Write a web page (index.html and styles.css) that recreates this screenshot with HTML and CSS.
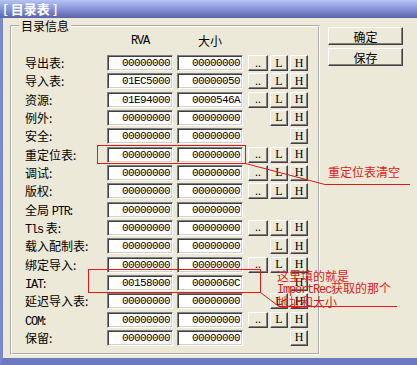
FILE: index.html
```html
<!DOCTYPE html>
<html lang="zh-CN">
<head>
    <meta charset="UTF-8">
    <title>目录表</title>
    <link rel="stylesheet" href="styles.css">
</head>
<body>
    <div class="window">
        <div class="titlebar">[ 目录表 ]</div>

        <div class="client">
            <fieldset class="group">
                <legend>目录信息</legend>

                <div class="row head">
                    <span></span>
                    <span class="en">RVA</span>
                    <span>大小</span>
                </div>

                <div class="rows">
                    <div class="row"><span class="label">导出表:</span><span class="box">00000000</span><span class="box">00000000</span><button class="mini dots">..</button><button class="mini l">L</button><button class="mini h">H</button></div>
                    <div class="row"><span class="label">导入表:</span><span class="box">01EC5000</span><span class="box">00000050</span><button class="mini dots">..</button><button class="mini l">L</button><button class="mini h">H</button></div>
                    <div class="row"><span class="label">资源:</span><span class="box">01E94000</span><span class="box">0000546A</span><button class="mini dots">..</button><button class="mini l">L</button><button class="mini h">H</button></div>
                    <div class="row"><span class="label">例外:</span><span class="box">00000000</span><span class="box">00000000</span><button class="mini l">L</button><button class="mini h">H</button></div>
                    <div class="row"><span class="label">安全:</span><span class="box">00000000</span><span class="box">00000000</span><button class="mini h">H</button></div>
                    <div class="row"><span class="label">重定位表:</span><span class="box">00000000</span><span class="box">00000000</span><button class="mini dots">..</button><button class="mini l">L</button><button class="mini h">H</button></div>
                    <div class="row"><span class="label">调试:</span><span class="box">00000000</span><span class="box">00000000</span><button class="mini dots">..</button><button class="mini l">L</button><button class="mini h">H</button></div>
                    <div class="row"><span class="label">版权:</span><span class="box">00000000</span><span class="box">00000000</span><button class="mini dots">..</button><button class="mini l">L</button><button class="mini h">H</button></div>
                    <div class="row"><span class="label">全局 <span class="en">PTR</span>:</span><span class="box">00000000</span><span class="box">00000000</span></div>
                    <div class="row"><span class="label"><span class="en">Tls</span> 表:</span><span class="box">00000000</span><span class="box">00000000</span><button class="mini dots">..</button><button class="mini l">L</button><button class="mini h">H</button></div>
                    <div class="row"><span class="label">载入配制表:</span><span class="box">00000000</span><span class="box">00000000</span><button class="mini l">L</button><button class="mini h">H</button></div>
                    <div class="row"><span class="label">绑定导入:</span><span class="box">00000000</span><span class="box">00000000</span><button class="mini dots">..</button><button class="mini l">L</button><button class="mini h">H</button></div>
                    <div class="row"><span class="label"><span class="en">IAT</span>:</span><span class="box">00158000</span><span class="box">0000060C</span><button class="mini h">H</button></div>
                    <div class="row"><span class="label">延迟导入表:</span><span class="box">00000000</span><span class="box">00000000</span><button class="mini l">L</button><button class="mini h">H</button></div>
                    <div class="row"><span class="label"><span class="en">COM</span>:</span><span class="box">00000000</span><span class="box">00000000</span><button class="mini dots">..</button><button class="mini l">L</button><button class="mini h">H</button></div>
                    <div class="row"><span class="label">保留:</span><span class="box">00000000</span><span class="box">00000000</span><button class="mini h">H</button></div>
                </div>
            </fieldset>

            <div class="actions">
                <button class="btn">确定</button>
                <button class="btn">保存</button>
            </div>
        </div>

        <!-- red notes drawn over the dialog -->
        <svg class="marks" width="417" height="365" viewBox="0 0 417 365">
            <rect x="97.5" y="145.5" width="148" height="18"/>
            <polyline points="245.5,163.5 325,184.5 410,184.5"/>
            <rect x="88.5" y="269.5" width="172" height="23"/>
            <polyline points="260.5,292.5 279,306.5 397,306.5"/>
        </svg>
        <div class="note note-reloc">重定位表清空</div>
        <div class="note note-iat">这里填的就是<br><span class="en">ImportRec</span>获取的那个<br>地址和大小</div>
    </div>
</body>
</html>
```

FILE: styles.css
```css
* {
    margin: 0;
    padding: 0;
    box-sizing: border-box;
}

body {
    width: 417px;
    height: 365px;
    overflow: hidden;
    font-family: "Noto Sans CJK SC", sans-serif;
    font-size: 12px;
    color: #000;
    background: #ece9d8;
}

.en {
    font-family: "Liberation Mono", monospace;
    letter-spacing: -1.2px;
}

.window {
    position: relative;
    width: 417px;
    height: 365px;
}

.titlebar {
    height: 18px;
    padding-left: 3px;
    background: linear-gradient(#b6c4f4, #8a98dc 45%, #5b64a6);
    color: #fff;
    font-size: 13px;
    font-weight: bold;
    line-height: 18px;
    white-space: pre;
}

.client {
    display: flex;
    height: 347px;
    padding: 1px 0 0 7px;
    background: #ece9d8;
    border-left: 3px solid #7b89cc;
    border-bottom: 7px solid #6d7abf;
}

/* group box */
.group {
    width: 310px;
    height: 336px;
    min-width: 0;
    border: 2px groove #fff;
    padding: 1px 9px 0 13px;
}

.group legend {
    margin-left: -6px;
    padding: 0 2px;
    line-height: 14px;
}

.row {
    display: grid;
    grid-template-columns: 82px 70px 71px 22px 20px 18px;
    height: 16px;
}

.head {
    height: 14px;
    margin-bottom: 7px;
    line-height: 14px;
}

.head span {
    width: 66px;
    text-align: center;
}

.rows {
    display: flex;
    flex-direction: column;
    gap: 2.33px;
}

.label {
    line-height: 16px;
    white-space: nowrap;
}

.box {
    width: 66px;
    height: 16px;
    padding-right: 2px;
    background: #fff;
    border: 1px solid;
    border-color: #808080 #fff #fff #808080;
    box-shadow: inset 1px 1px #404040, inset -1px -1px #d4d0c8;
    font-family: "Liberation Mono", monospace;
    font-size: 11px;
    letter-spacing: -0.6px;
    line-height: 14px;
    text-align: right;
}

/* small 3d buttons */
.mini {
    height: 16px;
    background: #ece9d8;
    border: 1px solid;
    border-color: #fff #404040 #404040 #fff;
    box-shadow: inset -1px -1px #808080;
    font-family: "Liberation Serif", serif;
    font-size: 12px;
    line-height: 13px;
    color: #000;
}

.mini.dots {
    grid-column: 4;
    width: 20px;
}

.mini.l {
    grid-column: 5;
    width: 18px;
}

.mini.h {
    grid-column: 6;
    width: 18px;
}

.actions {
    display: flex;
    flex-direction: column;
    gap: 3px;
    margin: 8px 0 0 8px;
}

.btn {
    width: 75px;
    height: 18px;
    background: #ece9d8;
    border: 1px solid;
    border-color: #fff #404040 #404040 #fff;
    box-shadow: inset -1px -1px #808080;
    font-family: "Noto Sans CJK SC", sans-serif;
    font-size: 12px;
    line-height: 15px;
    color: #000;
}

/* annotations */
.marks {
    position: absolute;
    left: 0;
    top: 0;
    pointer-events: none;
}

.marks rect,
.marks polyline {
    fill: none;
    stroke: #e01818;
    stroke-width: 1;
}

.note {
    position: absolute;
    color: #e01818;
    font-size: 12px;
    white-space: nowrap;
}

.note-reloc {
    left: 328px;
    top: 165px;
    line-height: 14px;
}

.note-iat {
    left: 277px;
    top: 270px;
    line-height: 12px;
}
```
